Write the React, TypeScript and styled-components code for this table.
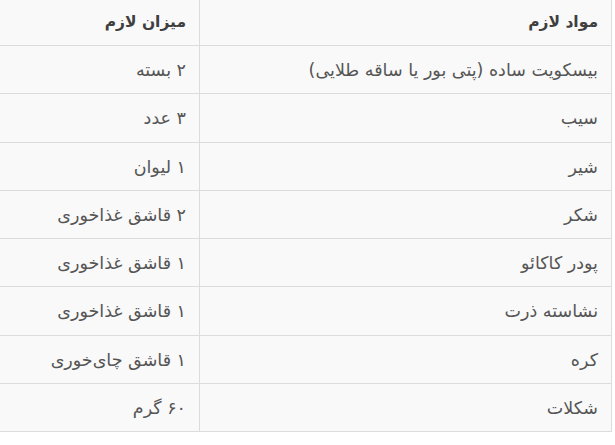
import React from "react";
import styled, { createGlobalStyle } from "styled-components";

const GlobalStyle = createGlobalStyle`
  html, body {
    margin: 0;
    padding: 0;
    background: #ffffff;
  }
`;

const Page = styled.div`
  direction: rtl;
  padding-right: 3px;
  font-family: "DejaVu Sans", "Noto Sans", sans-serif;
`;

const Table = styled.table`
  width: calc(100% + 1px);
  margin-left: -1px;
  table-layout: fixed;
  border-collapse: collapse;
  background: #f9f9f9;
  border: 1px solid #dcdcdc;
  border-top: none;
`;

const Col = styled.col<{ $width?: number }>`
  width: ${(p) => (p.$width ? `${p.$width}px` : "auto")};
`;

const HeadCell = styled.th`
  text-align: right;
  font-weight: bold;
  font-size: 15.5px;
  color: #3f3f3f;
  padding: 10px 13px 11px 12px;
  line-height: 24px;
  border-bottom: 1px solid #dcdcdc;
  border-left: 1px solid #dcdcdc;
`;

const Cell = styled.td`
  text-align: right;
  font-size: 17.5px;
  color: #555;
  padding: 12px 13px 11px 12px;
  line-height: 24.3px;
  white-space: nowrap;
  border-bottom: 1px solid #dcdcdc;
  border-left: 1px solid #dcdcdc;
`;

const rows: [string, string][] = [
  ["بیسکویت ساده (پتی بور یا ساقه طلایی)", "۲ بسته"],
  ["سیب", "۳ عدد"],
  ["شیر", "۱ لیوان"],
  ["شکر", "۲ قاشق غذاخوری"],
  ["پودر کاکائو", "۱ قاشق غذاخوری"],
  ["نشاسته ذرت", "۱ قاشق غذاخوری"],
  ["کره", "۱ قاشق چای‌خوری"],
  ["شکلات", "۶۰ گرم"],
];

export default function App() {
  return (
    <Page>
      <GlobalStyle />
      <Table>
        <colgroup>
          <Col $width={412} />
          <Col />
        </colgroup>
        <thead>
          <tr>
            <HeadCell>مواد لازم</HeadCell>
            <HeadCell>میزان لازم</HeadCell>
          </tr>
        </thead>
        <tbody>
          {rows.map(([item, amount]) => (
            <tr key={item}>
              <Cell>{item}</Cell>
              <Cell>{amount}</Cell>
            </tr>
          ))}
        </tbody>
      </Table>
    </Page>
  );
}
